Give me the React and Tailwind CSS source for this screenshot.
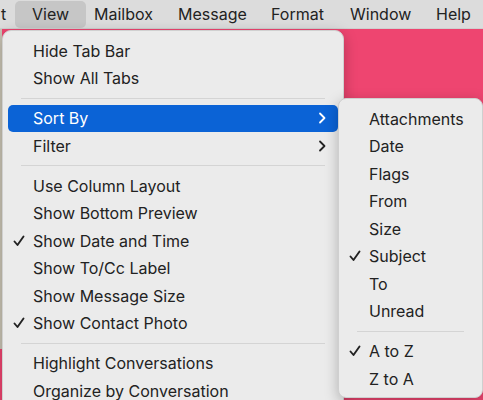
import React from 'react';

const font = { fontFamily: 'Inter, "Liberation Sans", sans-serif' };

const Check = () => (
    <svg width="12" height="12" viewBox="0 0 12 12" className="absolute left-[-20px] top-1/2 -translate-y-1/2">
        <path d="M1.5 6.5 L4.5 10 L10.5 1.5" fill="none" stroke="#222" strokeWidth="1.9" strokeLinecap="round" strokeLinejoin="round" />
    </svg>
);

const Chevron = ({ color }) => (
    <svg width="8" height="12" viewBox="0 0 8 12">
        <path d="M2 1.5 L6.5 6 L2 10.5" fill="none" stroke={color} strokeWidth="1.8" strokeLinecap="round" strokeLinejoin="round" />
    </svg>
);

const Item = ({ label, checked, sub, active }) => (
    <div
        className={`h-[27.5px] mx-[5px] rounded-[5px] flex items-center justify-between pl-[25px] pr-[12px] ${
            active ? 'bg-[#0b63d6] text-white' : 'text-[#222]'
        }`}
    >
        <span className="relative">
            {checked && <Check />}
            {label}
        </span>
        {sub && <Chevron color={active ? '#fff' : '#222'} />}
    </div>
);

const Sep = () => (
    <div className="h-[12.5px] flex items-center px-[18px]">
        <div className="h-px w-full bg-[#d4d4d4]" />
    </div>
);

export default function App() {
    const top = ['t', 'View', 'Mailbox', 'Message', 'Format', 'Window', 'Help'];
    return (
        <div className="w-[483px] h-[400px] overflow-hidden relative bg-[#ee4570] text-[16px]" style={font}>
            <div className="h-[29px] bg-[#dcdcdc] flex items-center text-[#222] border-b border-[#cfcfcf]">
                <div className="w-[15px] pl-px">t</div>
                <div className="h-[27px] w-[71px] rounded-[5px] bg-[#c6c6c6] flex items-center pl-[17px]">View</div>
                <div className="ml-[8px] w-[84px]">Mailbox</div>
                <div className="w-[93px]">Message</div>
                <div className="w-[79px]">Format</div>
                <div className="w-[86px]">Window</div>
                <div>Help</div>
            </div>
            <div className="absolute left-0 top-[29px] w-[2px] h-[320px] bg-[#c9c3b4]" />

            <div className="absolute left-[2px] top-[30px] w-[342px] h-[400px] bg-[#ebebeb] rounded-[9px] border border-[#d0d0d0] pt-[6px] shadow-[0_4px_14px_rgba(0,0,0,0.25)]">
                <Item label="Hide Tab Bar" />
                <Item label="Show All Tabs" />
                <Sep />
                <Item label="Sort By" sub active />
                <Item label="Filter" sub />
                <Sep />
                <Item label="Use Column Layout" />
                <Item label="Show Bottom Preview" />
                <Item label="Show Date and Time" checked />
                <Item label="Show To/Cc Label" />
                <Item label="Show Message Size" />
                <Item label="Show Contact Photo" checked />
                <Sep />
                <Item label="Highlight Conversations" />
                <Item label="Organize by Conversation" />
            </div>

            <div className="absolute left-[338px] top-[98px] w-[145px] h-[300px] bg-[#ebebeb] rounded-[8px] border border-[#cfcfcf] pt-[6px] shadow-[0_4px_14px_rgba(0,0,0,0.25)]">
                <Item label="Attachments" />
                <Item label="Date" />
                <Item label="Flags" />
                <Item label="From" />
                <Item label="Size" />
                <Item label="Subject" checked />
                <Item label="To" />
                <Item label="Unread" />
                <Sep />
                <Item label="A to Z" checked />
                <Item label="Z to A" />
            </div>
        </div>
    );
}
